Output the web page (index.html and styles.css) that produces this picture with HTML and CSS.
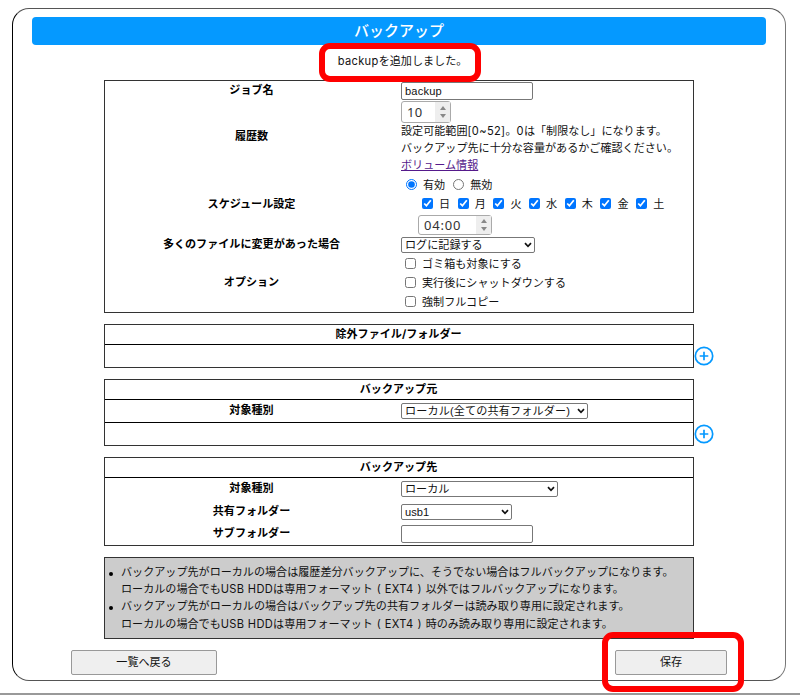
FILE: index.html
```html
<!DOCTYPE html>
<html lang="ja">
<head>
    <meta charset="UTF-8">
    <meta name="viewport" content="width=device-width, initial-scale=1.0">
    <title>バックアップ</title>
    <link rel="stylesheet" href="styles.css">
</head>
<body>
    <div class="panel">
        <h1>バックアップ</h1>
        <div class="message">
            <span class="message-text"><span class="latin">backup</span>を追加しました。</span>
        </div>

        <div class="box job">
            <div class="row row-name">
                <div class="label">ジョブ名</div>
                <div class="field"><input class="text" type="text" value="backup"></div>
            </div>
            <div class="row row-history">
                <div class="label">履歴数</div>
                <div class="field">
                    <div class="spinner count"><span>10</span><div class="arrows"><i class="up"></i><i class="down"></i></div></div>
                    <div class="line">設定可能範囲<span class="latin">[0~52]</span>。<span class="latin">0</span>は「制限なし」になります。</div>
                    <div class="line">バックアップ先に十分な容量があるかご確認ください。</div>
                    <div class="line"><a href="#">ボリューム情報</a></div>
                </div>
            </div>
            <div class="row row-schedule">
                <div class="label">スケジュール設定</div>
                <div class="field">
                    <div class="radios">
                        <label><input type="radio" name="enable" checked>有効</label>
                        <label><input type="radio" name="enable">無効</label>
                    </div>
                    <div class="days">
                        <label><input type="checkbox" checked>日</label>
                        <label><input type="checkbox" checked>月</label>
                        <label><input type="checkbox" checked>火</label>
                        <label><input type="checkbox" checked>水</label>
                        <label><input type="checkbox" checked>木</label>
                        <label><input type="checkbox" checked>金</label>
                        <label><input type="checkbox" checked>土</label>
                    </div>
                    <div class="spinner time"><span>04:00</span><div class="arrows"><i class="up"></i><i class="down"></i></div></div>
                </div>
            </div>
            <div class="row row-change">
                <div class="label">多くのファイルに変更があった場合</div>
                <div class="field">
                    <div class="select select-log">
                        <select><option>ログに記録する</option></select>
                        <svg viewBox="0 0 8 6"><path d="M1 1.2L4 4.3L7 1.2"/></svg>
                    </div>
                </div>
            </div>
            <div class="row row-option">
                <div class="label">オプション</div>
                <div class="field options">
                    <label><input type="checkbox">ゴミ箱も対象にする</label>
                    <label><input type="checkbox">実行後にシャットダウンする</label>
                    <label><input type="checkbox">強制フルコピー</label>
                </div>
            </div>
        </div>

        <div class="box exclude">
            <div class="head">除外ファイル/フォルダー</div>
            <div class="add-row">
                <svg class="add" viewBox="0 0 20 20"><circle cx="10" cy="10" r="8.7"/><path d="M10 5.7V14.3M5.7 10H14.3"/></svg>
            </div>
        </div>

        <div class="box source">
            <div class="head">バックアップ元</div>
            <div class="row row-type">
                <div class="label">対象種別</div>
                <div class="field">
                    <div class="select select-source">
                        <select><option>ローカル(全ての共有フォルダー)</option></select>
                        <svg viewBox="0 0 8 6"><path d="M1 1.2L4 4.3L7 1.2"/></svg>
                    </div>
                </div>
            </div>
            <div class="add-row">
                <svg class="add" viewBox="0 0 20 20"><circle cx="10" cy="10" r="8.7"/><path d="M10 5.7V14.3M5.7 10H14.3"/></svg>
            </div>
        </div>

        <div class="box dest">
            <div class="head">バックアップ先</div>
            <div class="row">
                <div class="label">対象種別</div>
                <div class="field">
                    <div class="select select-dest">
                        <select><option>ローカル</option></select>
                        <svg viewBox="0 0 8 6"><path d="M1 1.2L4 4.3L7 1.2"/></svg>
                    </div>
                </div>
            </div>
            <div class="row">
                <div class="label">共有フォルダー</div>
                <div class="field">
                    <div class="select select-share">
                        <select><option>usb1</option></select>
                        <svg viewBox="0 0 8 6"><path d="M1 1.2L4 4.3L7 1.2"/></svg>
                    </div>
                </div>
            </div>
            <div class="row">
                <div class="label">サブフォルダー</div>
                <div class="field"><input class="text" type="text"></div>
            </div>
        </div>

        <ul class="box notes">
            <li>バックアップ先がローカルの場合は履歴差分バックアップに、そうでない場合はフルバックアップになります。<br>ローカルの場合でも<span class="latin">USB HDD</span>は専用フォーマット<span class="paren">(</span><span class="latin">EXT4</span><span class="paren">)</span>以外ではフルバックアップになります。</li>
            <li>バックアップ先がローカルの場合はバックアップ先の共有フォルダーは読み取り専用に設定されます。<br>ローカルの場合でも<span class="latin">USB HDD</span>は専用フォーマット<span class="paren">(</span><span class="latin">EXT4</span><span class="paren">)</span>時のみ読み取り専用に設定されます。</li>
        </ul>

        <div class="buttons">
            <button class="back">一覧へ戻る</button>
            <div class="save-wrap"><button class="save">保存</button></div>
        </div>
    </div>
    <div class="footer-line"></div>
</body>
</html>
```
FILE: styles.css
```css
*, *::before, *::after {
    box-sizing: border-box;
}
body {
    margin: 0;
    padding: 8px 0 0 12px;
    height: 695px;
    overflow: hidden;
    background: #fff;
    color: #111;
    font: 11.08px/17px Inter, "Noto Sans CJK JP", sans-serif;
    text-spacing-trim: space-all;
}
.latin {
    letter-spacing: .35px;
}
.panel {
    width: 774px;
    height: 673px;
    padding: 8px 19px 0 19px;
    border: 1px solid #555;
    border-left-color: #000;
    border-right-color: #777;
    border-radius: 17px;
}
h1 {
    width: 734px;
    height: 28px;
    margin: 0;
    border-radius: 4px;
    background: #0599ff;
    color: #fff;
    font-size: 15px;
    font-weight: 500;
    line-height: 27px;
    text-align: center;
}
.message {
    height: 35px;
    padding-top: 8px;
    text-align: center;
}
.message-text {
    position: relative;
    display: inline-block;
    margin-left: 7px;
}
.message-text::after {
    content: "";
    position: absolute;
    left: -19px;
    top: -10px;
    width: 162px;
    height: 39px;
    border: 6px solid #f00;
    border-radius: 11px;
}

/* boxes */
.box {
    width: 590px;
    margin: 0 0 11px 72px;
    border: 1px solid #333;
}
.job {
    height: 233px;
}
.row {
    display: grid;
    grid-template-columns: 296px 1fr;
    align-items: center;
}
.label, .head {
    color: #000;
    font-weight: bold;
    text-align: center;
}
.label {
    padding-right: 3px;
}
.head {
    height: 20px;
    padding-right: 1px;
    line-height: 18px;
    border-bottom: 1px solid #000;
}
.row-name { height: 20px; }
.row-name .label { padding-bottom: 1px; }
.row-history { height: 73px; }
.row-history .label { padding-bottom: 2px; }
.row-schedule { height: 61px; }
.row-change { height: 19px; }
.row-option { height: 58px; }
.row-option .label { padding-bottom: 2px; }

/* form parts */
input, select, button {
    margin: 0;
    font: inherit;
    color: #111;
}
.text, select {
    font: 11.1px "Liberation Sans", "Noto Sans CJK JP", sans-serif;
}
.text {
    display: block;
    width: 132px;
    height: 18px;
    padding: 0 3px;
    border: 1px solid #777;
    border-radius: 2px;
    letter-spacing: .2px;
}
.spinner {
    display: flex;
    height: 22px;
    border: 1px solid #aaa;
    border-radius: 3px;
    font: 13px/20px "Noto Sans", sans-serif;
    letter-spacing: .2px;
    color: #333;
}
.spinner span {
    flex: 1;
    padding-left: 5px;
}
.count {
    width: 50px;
}
.time {
    width: 74px;
    height: 20px;
    margin-left: 17px;
    line-height: 18px;
    letter-spacing: .8px;
}
.arrows {
    display: flex;
    flex-direction: column;
    justify-content: space-between;
    align-items: center;
    width: 15px;
    padding: 4px 0;
    background: #eee;
}
.time .arrows {
    padding: 3px 0;
}
.up, .down {
    border: 3px solid transparent;
}
.up {
    border-top: 0;
    border-bottom: 4px solid #888;
}
.down {
    border-bottom: 0;
    border-top: 4px solid #888;
}
a {
    color: #551a8b;
}
label {
    display: flex;
    align-items: center;
}
input[type="radio"], input[type="checkbox"] {
    width: 11px;
    height: 11px;
    accent-color: #0075ff;
}
.radios {
    display: flex;
    gap: 8px;
    height: 20px;
    padding: 2px 0 0 5px;
}
.radios input {
    margin: 0 6px 3px 0;
}
.days {
    display: flex;
    height: 20px;
    padding-left: 21px;
}
.days label {
    width: 35.7px;
}
.days input {
    margin: 0 6px 2px 0;
}
.options label {
    height: 19px;
    padding: 1px 0 0 4px;
}
.options input {
    margin: 0 6px 3px 0;
}
.select {
    position: relative;
    height: 16px;
}
.select select {
    display: block;
    width: 100%;
    height: 100%;
    padding: 0 3px;
    border: 1px solid #777;
    border-radius: 2px;
    background: #fff;
    line-height: 14px;
    appearance: none;
}
.select svg {
    position: absolute;
    right: 3px;
    top: 5px;
    width: 8px;
    height: 6px;
    fill: none;
    stroke: #111;
    stroke-width: 1.7;
}
.select-log { width: 134px; }
.select-source { width: 187px; }
.select-source select { letter-spacing: .15px; }
.select-dest { width: 157px; }
.select-share { width: 111px; }

/* exclude / source / destination */
.exclude {
    height: 44px;
}
.add-row {
    display: flex;
    justify-content: flex-end;
    align-items: center;
    height: 22px;
}
.add {
    flex: none;
    width: 20px;
    height: 20px;
    margin-right: -21px;
    fill: none;
    stroke: #0599ff;
    stroke-width: 1.7;
}
.source {
    height: 67px;
}
.row-type {
    height: 23px;
    border-bottom: 1px solid #000;
}
.row-type .label {
    padding-bottom: 2px;
}
.dest {
    height: 89px;
}
.dest .row {
    height: 22.4px;
}
.dest .label {
    padding-bottom: 1px;
}
.notes {
    height: 82px;
    padding: 6px 0 0 16px;
    background: #ccc;
    list-style: none;
}
.notes li {
    position: relative;
    height: 34.4px;
    line-height: 17.2px;
    white-space: nowrap;
}
.notes li::before {
    content: "";
    position: absolute;
    left: -12px;
    top: 8px;
    width: 4px;
    height: 4px;
    border-radius: 50%;
    background: #000;
}
.paren {
    margin: 0 4px;
}

/* buttons */
.buttons {
    display: flex;
    justify-content: space-between;
    padding: 0 39px 0 39px;
}
button {
    display: block;
    height: 25px;
    padding: 0;
    border: 1px solid #999;
    border-radius: 2px;
    background: #efefef;
}
.back {
    width: 146px;
}
.save {
    width: 112px;
}
.save-wrap {
    position: relative;
}
.save-wrap::after {
    content: "";
    position: absolute;
    left: -13px;
    top: -18px;
    width: 142px;
    height: 60px;
    border: 6px solid #f00;
    border-radius: 11px;
}
.footer-line {
    height: 2px;
    margin: 12px 0 0 -12px;
    background: #999;
}
```
